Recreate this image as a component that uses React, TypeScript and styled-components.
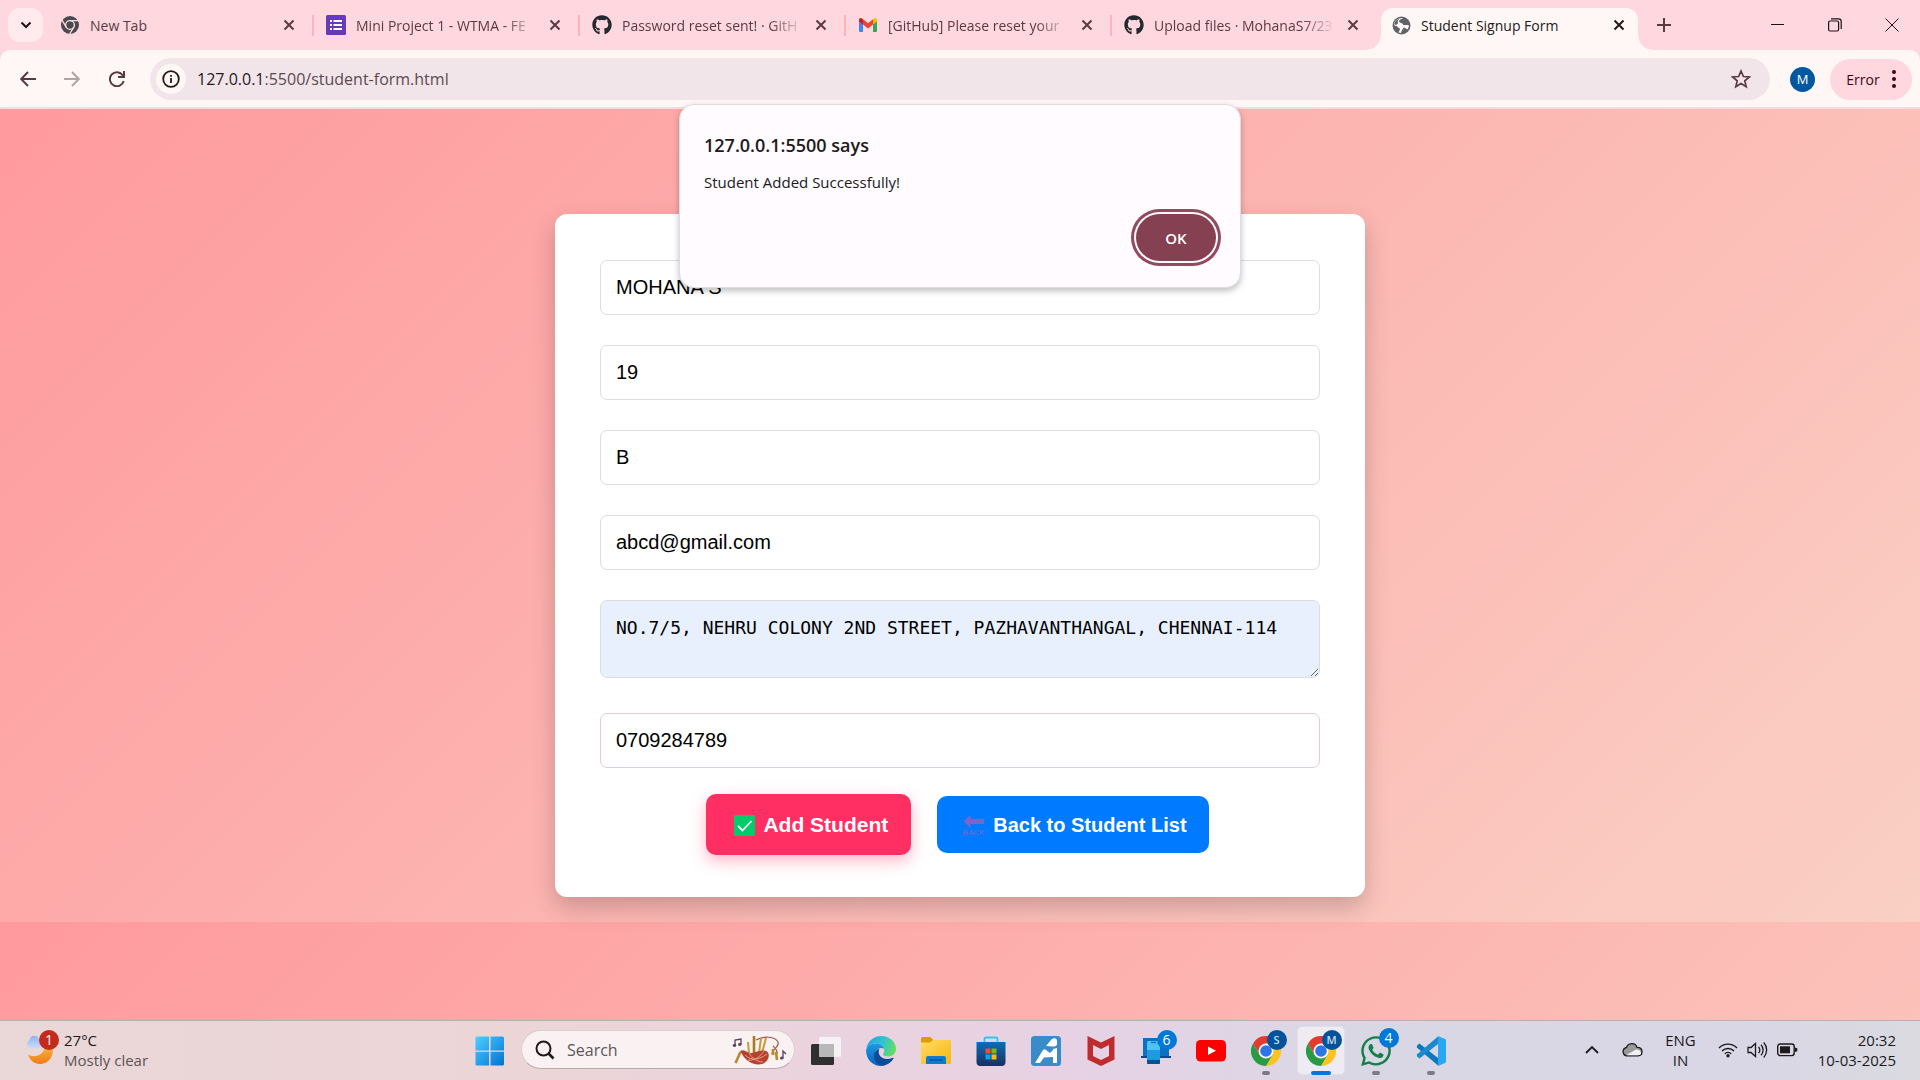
import React from "react";
import styled, { createGlobalStyle, css } from "styled-components";
import { FaGithub, FaWhatsapp } from "react-icons/fa";

const ui = `"Open Sans", "Noto Sans", sans-serif`;
const form = `"Liberation Sans", Arial, sans-serif`;

const Global = createGlobalStyle`
  * { box-sizing: border-box; }
  body { margin: 0; font-family: ${ui}; }
  button { font: inherit; border: 0; padding: 0; background: none; color: inherit; }
  svg { display: block; flex: none; }
`;

const Screen = styled.div`
  min-height: 100vh;
  display: flex;
  flex-direction: column;
`;

/* ---------- tab strip ---------- */
const TabStrip = styled.header`
  height: 50px;
  display: flex;
  align-items: center;
  padding-left: 8px;
  background: #ffd7de;
  color: #5a3a42;
`;
const TabSearch = styled.button`
  width: 35px;
  height: 34px;
  margin-right: 5px;
  border-radius: 12px;
  background: #ffebee;
  color: #221216;
  display: grid;
  place-items: center;
`;
const TabItem = styled.div<{ $last?: boolean }>`
  width: 266px;
  height: 21px;
  min-width: 0;
  display: flex;
  align-items: center;
  padding: 0 15px 0 12px;
  border-right: 2px solid ${(p) => (p.$last ? "transparent" : "#ffb3bf")};
`;
const ActiveTab = styled.div`
  position: relative;
  align-self: flex-end;
  width: 257px;
  height: 42px;
  margin-left: 3px;
  display: flex;
  align-items: center;
  padding: 0 11px;
  padding-bottom: 8px;
  background: #fff7f5;
  border-radius: 12px 12px 0 0;
  color: #22191b;
  &::before, &::after {
    content: "";
    position: absolute;
    bottom: 0;
    width: 14px;
    height: 14px;
  }
  &::before { left: -14px; background: radial-gradient(circle at 0 0, transparent 13px, #fff7f5 14px); }
  &::after { right: -14px; background: radial-gradient(circle at 100% 0, transparent 13px, #fff7f5 14px); }
`;
const TabTitle = styled.span<{ $fade?: boolean }>`
  flex: 1;
  min-width: 0;
  margin: 0 10px;
  padding-top: 1px;
  font-size: 14px;
  line-height: 20px;
  white-space: nowrap;
  overflow: hidden;
  ${(p) => p.$fade && css`mask-image: linear-gradient(90deg, #000 82%, transparent 100%);`}
`;
const IconButton = styled.button<{ $w?: number }>`
  width: ${(p) => p.$w ?? 16}px;
  height: 28px;
  flex: none;
  display: grid;
  place-items: center;
`;
const WindowButtons = styled.div`
  margin-left: auto;
  display: flex;
  color: #1c1214;
`;

/* ---------- toolbar ---------- */
const ToolbarBack = styled.div`
  background: #ffd7de;
`;
const Toolbar = styled.nav`
  height: 59px;
  display: flex;
  align-items: center;
  padding: 1px 8px 0 6px;
  background: #fff7f5;
  border-bottom: 2px solid #f1dde1;
  border-radius: 10px 10px 0 0;
  color: #5a3a42;
`;
const Omnibox = styled.div`
  flex: 1;
  height: 42px;
  margin-left: 11px;
  padding: 0 18px 0 6px;
  display: flex;
  align-items: center;
  gap: 11px;
  border-radius: 21px;
  background: #f2e5ea;
`;
const SiteInfo = styled.button`
  width: 30px;
  height: 30px;
  border-radius: 50%;
  background: #fff7f5;
  color: #22191b;
  display: grid;
  place-items: center;
`;
const Address = styled.div`
  flex: 1;
  font-size: 16px;
  line-height: 24px;
  color: #5a4a50;
  b { font-weight: 400; color: #1f1a1c; }
`;
const Avatar = styled.button`
  width: 25px;
  height: 25px;
  margin: 0 15px 0 20px;
  border-radius: 50%;
  background: #0158a0;
  color: #fff;
  font-size: 13px;
`;
const ErrorPill = styled.button`
  height: 41px;
  width: 82px;
  border-radius: 21px;
  background: #ffd7de;
  color: #3b0716;
  display: flex;
  align-items: center;
  justify-content: center;
  gap: 12px;
  font-size: 14px;
`;

/* ---------- page ---------- */
const Page = styled.main`
  position: relative;
  flex: 1;
  padding: 105px 24px 24px;
  background: linear-gradient(135deg, #ff9a9e, #fad0c4) 0 0 / 100% 813px;
`;
const Card = styled.form`
  max-width: 810px;
  margin: 0 auto;
  padding: 46px 45px 42px;
  border-radius: 12px;
  background: #fff;
  box-shadow: 0 10px 25px rgba(0, 0, 0, 0.2);
  display: flex;
  flex-direction: column;
`;
const fieldStyle = css`
  display: block;
  width: 100%;
  margin: 0 0 30px;
  padding: 0 15px;
  border: 1px solid #ddd;
  border-radius: 7px;
  background: #fff;
  color: #000;
  outline: 0;
`;
const Field = styled.input<{ $tint?: boolean }>`
  ${fieldStyle}
  height: 55px;
  font: 20px ${form};
  ${(p) => p.$tint && css`border-color: #e6ccd5; margin-bottom: 26px;`}
`;
const AddressField = styled.textarea`
  ${fieldStyle}
  height: 78px;
  margin-bottom: 35px;
  padding: 15px;
  background: #e8f0fe;
  font: 18px/24px "DejaVu Sans Mono", monospace;
  white-space: pre;
  overflow: hidden;
`;
const Actions = styled.div`
  display: flex;
  align-items: center;
  justify-content: center;
  gap: 26px;
  padding-right: 5px;
`;
const ActionButton = styled.button<{ $primary?: boolean }>`
  display: flex;
  align-items: center;
  gap: ${(p) => (p.$primary ? 8 : 9)}px;
  height: ${(p) => (p.$primary ? 61 : 57)}px;
  padding: 1px ${(p) => (p.$primary ? 23 : 22)}px 0 ${(p) => (p.$primary ? 28 : 26)}px;
  border-radius: 10px;
  background: ${(p) => (p.$primary ? "#ff2e63" : "#007bff")};
  box-shadow: ${(p) => (p.$primary ? "0 6px 16px rgba(255, 46, 99, 0.35)" : "none")};
  color: #fff;
  font: bold ${(p) => (p.$primary ? 21 : 20)}px ${form};
  white-space: nowrap;
`;

/* ---------- alert ---------- */
const Alert = styled.div`
  position: absolute;
  top: -5px;
  left: 50%;
  width: 562px;
  margin-left: -281px;
  padding: 28px 22px 26px 24px;
  border: 1px solid #dfdde2;
  border-radius: 15px;
  background: #fffbff;
  box-shadow: 0 3px 6px rgba(0, 0, 0, 0.25);
  color: #201a1b;
  display: flex;
  flex-direction: column;
`;
const AlertTitle = styled.h1`
  margin: 0;
  font-size: 18px;
  line-height: 24px;
  font-weight: 600;
`;
const AlertText = styled.p`
  margin: 15px 0 22px;
  font-size: 15px;
  line-height: 20px;
`;
const OkButton = styled.button`
  align-self: flex-end;
  width: 80px;
  height: 47px;
  margin-right: 2px;
  border-radius: 24px;
  background: #854152;
  box-shadow: 0 0 0 2px #fffbff, 0 0 0 5px #914a5e;
  color: #fff;
  font-size: 15px;
  font-weight: 600;
`;

/* ---------- taskbar ---------- */
const Taskbar = styled.footer`
  height: 60px;
  display: grid;
  grid-template-columns: 1fr auto 1fr;
  align-items: center;
  border-top: 1px solid #b9aeb4;
  background: linear-gradient(90deg, #ead7d7 0%, #ecd5d7 28%, #ead3df 45%, #e6d2e5 57%, #dad7e5 70%, #d9d7e5 92%, #dadae0 100%);
  color: #1c1a1c;
`;
const Weather = styled.div`
  display: flex;
  align-items: center;
  gap: 4px;
  padding: 0 0 2px 25px;
`;
const TwoLines = styled.div<{ $align?: string }>`
  font-size: 15px;
  line-height: 20px;
  text-align: ${(p) => p.$align ?? "left"};
  white-space: nowrap;
  small { font-size: 15px; color: #5a5356; }
`;
const Dock = styled.div`
  display: flex;
  align-items: center;
`;
const DockItem = styled.button`
  position: relative;
  width: 55px;
  height: 59px;
  display: grid;
  place-items: center;
`;
const ActiveTile = styled.span`
  position: absolute;
  inset: 5px 3px 5px 4px;
  border: 1px solid #e2dfe8;
  border-radius: 5px;
  background: #eeebf3;
`;
const DockArt = styled.span`
  position: relative;
`;
const Badge = styled.span<{ $dark?: boolean }>`
  position: absolute;
  right: -6px;
  top: -6px;
  width: 20px;
  height: 20px;
  border-radius: 50%;
  background: ${(p) => (p.$dark ? "#04539a" : "#0078d7")};
  color: ${(p) => (p.$dark ? "#c3dcf1" : "#fff")};
  font-size: ${(p) => (p.$dark ? 11 : 14)}px;
  line-height: 20px;
  font-weight: ${(p) => (p.$dark ? 600 : 400)};
  text-align: center;
`;
const Running = styled.span<{ $active?: boolean }>`
  position: absolute;
  bottom: 5px;
  left: 50%;
  width: ${(p) => (p.$active ? 20 : 8)}px;
  margin-left: ${(p) => (p.$active ? -10 : -4)}px;
  height: 4px;
  border-radius: 2px;
  background: ${(p) => (p.$active ? "#0078d7" : "#7f7983")};
`;
const SearchBox = styled.label`
  width: 274px;
  height: 39px;
  margin: 0 3px 2px 4px;
  padding: 0 6px 0 13px;
  display: flex;
  align-items: center;
  gap: 12px;
  border: 1px solid #dccdd0;
  border-bottom-color: #b8abae;
  border-radius: 20px;
  background: #f9f1f2;
  input {
    flex: 1;
    min-width: 0;
    padding: 0;
    border: 0;
    outline: 0;
    background: none;
    font: 16px ${ui};
    &::placeholder { color: #5c5759; opacity: 1; }
  }
`;
const Tray = styled.div`
  display: flex;
  align-items: center;
  justify-content: flex-end;
  padding: 0 24px 2px 0;
`;
const TrayGroup = styled.div`
  display: flex;
  align-items: center;
  gap: 9px;
  margin: 0 20px 0 22px;
`;
const TrayButton = styled.button<{ $gap: number }>`
  margin-right: ${(p) => p.$gap}px;
`;

/* ---------- drawings ---------- */
const Close = ({ label, c }: { label: string; c?: string }) => (
  <IconButton type="button" aria-label={label}>
    <svg width="12" height="12" viewBox="0 0 12 12" stroke={c ?? "currentColor"} strokeWidth="2"><path d="M1.5 1.5l9 9M10.5 1.5l-9 9" /></svg>
  </IconButton>
);
const GreyChrome = () => (
  <svg width="20" height="20" viewBox="0 0 20 20">
    <circle cx="10" cy="10" r="9" fill="#474b4f" />
    <circle cx="10" cy="10" r="4.4" fill="none" stroke="#ffd7de" strokeWidth="1.4" />
    <path d="M10 5.6h8.5M6.2 12.2L2 5M13.8 12.2L9.6 19" stroke="#ffd7de" strokeWidth="1.4" />
  </svg>
);
const Forms = () => (
  <svg width="20" height="20" viewBox="0 0 20 20">
    <rect width="20" height="20" rx="1.5" fill="#673ab7" />
    <path d="M4 5h2v2H4zM7.500 5H16v2H7.500zM4 9h2v2H4zM7.500 9H16v2H7.500zM4 13h2v2H4zM7.500 13H16v2H7.500z" fill="#fff" />
  </svg>
);
const Gmail = () => (
  <svg width="20" height="20" viewBox="0 0 20 20">
    <path d="M1 5v11a1 1 0 001 1h3V8z" fill="#4285f4" />
    <path d="M19 5v11a1 1 0 01-1 1h-3V8z" fill="#34a853" />
    <path d="M15 4.500V9.500l4-3V5c0-2-2-2.600-3.200-1.500z" fill="#fbbc04" />
    <path d="M5 4.500V9.500L1 6.500V5c0-2 2-2.600 3.200-1.500z" fill="#c5221f" />
    <path d="M5 4.300l5 3.900 5-3.900V9.500l-5 3.900-5-3.900z" fill="#ea4335" />
  </svg>
);
const Globe = () => (
  <svg width="19" height="19" viewBox="0 0 19 19">
    <circle cx="9.500" cy="9.500" r="9" fill="#5f6368" />
    <path d="M11 2c-1.200 1.200-3.200 1-3.800 2.600-.5 1.500.6 2.400 2 2.500 1.300.1 1.300 1.500 2.500 1.900 1.500.4 3.300-.3 5.300.5-.1 1.500-.6 2.800-1.400 3.800-1.500-.4-2-1.500-3.300-1.600-1.600 0-1.300 1.500-2.300 2.500-.8.8-.4 1.800-1 2.800-.9 0-1.700-.2-2.400-.4.300-1.500 1.300-2 1.300-3.300 0-1.800-2-1.500-2.800-2.700C4.400 9.500 3.300 9.600 2 9.200 2 4.800 6 1.500 11 2z" fill="#fff7f5" />
    <path d="M2.200 8.500C2.500 5.500 5 3 8.200 2.200 6.500 3.500 5.500 4.500 5.900 6.200c.3 1.400-.7 2-1.500 2.600z" fill="#5f6368" />
  </svg>
);
const WeatherIcon = () => (
  <svg width="35" height="44" viewBox="0 0 35 44">
    <defs>
      <linearGradient id="moon" x1="0" y1="0" x2="0" y2="1"><stop stopColor="#f8b838" /><stop offset="1" stopColor="#f07a1c" /></linearGradient>
      <linearGradient id="cloud" x1="0" y1="0" x2="0" y2="1"><stop stopColor="#8eb2ee" /><stop offset="1" stopColor="#c9dcf9" /></linearGradient>
    </defs>
    <path d="M27 18c3 9-3 18-12 18-6 0-10-4-12-9 8 3 16 0 17-9z" fill="url(#moon)" />
    <path d="M4.500 20a4.500 4.500 0 010-8C5 7 12 6 14 11c4 0 6 3 5 7-.5 1.500-1.500 2-3 2z" fill="url(#cloud)" />
    <circle cx="24" cy="12" r="10" fill="#c42b1c" />
    <text x="24" y="17" textAnchor="middle" fontSize="14" fill="#fff">1</text>
  </svg>
);
const Windows = () => (
  <svg width="30" height="30" viewBox="0 0 30 30">
    <defs><linearGradient id="win" x1="0" y1="0" x2="1" y2="1"><stop stopColor="#4cd0ff" /><stop offset="1" stopColor="#0072d4" /></linearGradient></defs>
    <path d="M2 .5h12v14H.5V2A1.500 1.500 0 012 .5zM15.500.5h12A1.500 1.500 0 0129 2v12.500H15.500zM.5 15.800H14v13.700H2A1.500 1.500 0 01.5 28zM15.500 15.800H29V28a1.500 1.500 0 01-1.500 1.500h-12z" fill="url(#win)" />
  </svg>
);
const Bagpipes = () => (
  <svg width="56" height="32" viewBox="0 0 56 32" fill="none">
    <path d="M24 6c7-4 19-4 22 2 2 4-6 8-6 12M41 12c2 2 5 4 4 8" stroke="#a4584a" strokeWidth="1.200" />
    <path d="M22 2v17" stroke="#a87a22" strokeWidth="2.600" />
    <path d="M29 4l-2 15M34 4l-4 15M16 8l1 11" stroke="#c79a3a" strokeWidth="2" />
    <path d="M3.500 29l5-11M41 15v6M44 18l1 8" stroke="#b98a2c" strokeWidth="2.600" />
    <path d="M8 17c3-2 6 0 9 2 5 1 10-4 17-2 5 2 3 11-4 13-9 2-17-4-20-10z" fill="#b5412e" />
    <path d="M13 21c6 6 14 5 22-1M17 19c3 5 8 9 14 9M16 26c6 1 12-3 16-9" stroke="#e9a88f" strokeWidth=".9" />
    <path d="M3 11V6l6-1v5" stroke="#59425c" strokeWidth="1.300" />
    <ellipse cx="2.500" cy="11.500" rx="1.800" ry="1.400" fill="#59425c" /><ellipse cx="7.800" cy="10.500" rx="1.800" ry="1.400" fill="#59425c" />
    <path d="M51 24v-7l3 3" stroke="#59425c" strokeWidth="1.300" /><ellipse cx="49.800" cy="24" rx="1.800" ry="1.500" fill="#59425c" />
  </svg>
);
const TaskView = () => (
  <svg width="30" height="28" viewBox="0 0 30 28">
    <rect x="0" y="7" width="23" height="21" rx="1.500" fill="#2f2f2f" />
    <rect x="8" y="0" width="22" height="20" rx="1.500" fill="#f4f2f4" />
    <path d="M8 7h15v13H9.500A1.500 1.500 0 018 18.500z" fill="#b9b8b9" />
  </svg>
);
const Edge = () => (
  <svg width="30" height="30" viewBox="0 0 30 30">
    <defs>
      <linearGradient id="eg" x1="0" y1=".3" x2="1" y2=".6"><stop stopColor="#22a3e6" /><stop offset=".5" stopColor="#30c3d0" /><stop offset="1" stopColor="#66e05a" /></linearGradient>
      <linearGradient id="eb" x1="0" y1="0" x2="0" y2="1"><stop stopColor="#1a9be4" /><stop offset="1" stopColor="#0a62b8" /></linearGradient>
    </defs>
    <path d="M.3 13C1.500 5.500 7.500 0 15 0c9 0 15 6.500 15 13 0 5-4 7.500-8 7.500-3.500 0-5-1.300-5-2.200 0-.8 1.300-1.500 1.300-3.800C18.300 11 14.500 7.500 9.500 7.500 5 7.500 1.500 10 .3 13z" fill="url(#eg)" />
    <path d="M.1 14.500C.5 10.500 4.500 7.500 9.500 7.500c4.500 0 7.500 2.300 8.500 5-5-2-9 1.500-9 6 0 6 5 11 10 10.800-1.300.5-2.600.7-4 .7C6.500 30 0 23 .1 14.500z" fill="url(#eb)" />
    <path d="M13.500 12.500c-3.500 1.500-5.500 4-5.500 7.500C8 26 13 30 18 29.500c4-.8 7.500-3.500 9.500-7 .3-.6-.2-1-.8-.8-7 3-14 0-14-5.700 0-1.500.3-2.700.8-3.500z" fill="#0c4a9a" />
  </svg>
);
const Folder = () => (
  <svg width="30" height="27" viewBox="0 0 30 27">
    <defs><linearGradient id="fo" x1="0" y1="0" x2="1" y2="1"><stop stopColor="#ffdc66" /><stop offset="1" stopColor="#f7b70a" /></linearGradient></defs>
    <path d="M0 1.500A1.500 1.500 0 011.500 0H9l3.500 3V8H0z" fill="#dc9c05" />
    <path d="M0 5.500h9L12 3h17a1 1 0 011 1v22a1 1 0 01-1 1H1a1 1 0 01-1-1z" fill="url(#fo)" />
    <path d="M5 27v-6a2 2 0 012-2h16a2 2 0 012 2v6z" fill="#0f7bd0" /><path d="M8.500 23h13" stroke="#0a4f92" strokeWidth="1.300" />
  </svg>
);
const Store = () => (
  <svg width="30" height="30" viewBox="0 0 30 30">
    <defs><linearGradient id="st" x1="0" y1="0" x2="0" y2="1"><stop stopColor="#0f6cbd" /><stop offset="1" stopColor="#1b2f5c" /></linearGradient></defs>
    <path d="M8.500 7V3A1.500 1.500 0 0110 1.500h10A1.500 1.500 0 0121.500 3v4" fill="none" stroke="#35c1f1" strokeWidth="1.800" />
    <path d="M.5 6h29v20a4 4 0 01-4 4h-21a4 4 0 01-4-4z" fill="url(#st)" />
    <path d="M9.500 12.500h5v5h-5z" fill="#f25022" /><path d="M15.500 12.500h5v5h-5z" fill="#7fba00" /><path d="M9.500 18.500h5v5h-5z" fill="#00a4ef" /><path d="M15.500 18.500h5v5h-5z" fill="#ffb900" />
  </svg>
);
const AiApp = () => (
  <svg width="30" height="30" viewBox="0 0 30 30">
    <rect width="30" height="30" rx="3.500" fill="#3a8bc9" />
    <path d="M4 27l8-13c1-1 2-1 3 0l4 3 3-3v-1l4-1v15h-4v-6l-9 .5L9 27z" fill="#fff" />
    <path d="M15 10l5-6c2-2.500 6-2.500 6 1v3c0 2-2 2.500-4 2.500z" fill="#fff" />
  </svg>
);
const McAfee = () => (
  <svg width="28" height="30" viewBox="0 0 28 30"><path d="M.5 0L14 6.500 27.500 0v23.500L14 30 .5 23.500zM6 9v11l8 4 8-4V9l-8 4z" fill="#c02c2e" fillRule="evenodd" /></svg>
);
const PhoneLink = () => (
  <svg width="30" height="30" viewBox="0 0 30 30">
    <path d="M2 2h26v18H2z" fill="#0f6fc0" /><path d="M0 20h30v2H0z" fill="#0a4a86" />
    <rect x="6" y="5" width="13" height="23" rx="1.500" fill="#4cc4f2" /><path d="M6 14h13v14H6z" fill="#1e9be0" /><path d="M6 24h13v2.500a1.500 1.500 0 01-1.500 1.500h-10A1.500 1.500 0 016 26.500z" fill="#0b4f93" /><path d="M10 6.500h5" stroke="#0f6fc0" strokeWidth="1.300" />
  </svg>
);
const YouTube = () => (
  <svg width="30" height="30" viewBox="0 0 30 30"><rect y="4" width="30" height="21.500" rx="4.500" fill="#f00" /><path d="M12 10.500v8.500l8-4.200z" fill="#fff" /></svg>
);
const Chrome = () => (
  <svg width="30" height="30" viewBox="0 0 30 30">
    <path d="M15 7.500h13A15 15 0 0115 30l6.500-11.200z" fill="#fcc31e" />
    <path d="M2 7.500A15 15 0 0128 7.500H15L8.500 18.700z" fill="#e33b2e" />
    <path d="M2 7.500A15 15 0 0015 30l6.500-11.200-13 0z" fill="#2b9a45" />
    <circle cx="15" cy="15" r="7.500" fill="#fff" /><circle cx="15" cy="15" r="5.800" fill="#2c74e8" />
  </svg>
);
const Code = () => (
  <svg width="30" height="30" viewBox="0 0 30 30">
    <path d="M1 9.500L3.500 7.500 22 22v7.500L.8 11.500z" fill="#0f78bd" />
    <path d="M1 20.500L3.500 22.500 22 8V.5L.8 18.500z" fill="#1a89d0" />
    <path d="M22 0l7 3a1.500 1.500 0 011 1.500v21a1.500 1.500 0 01-1 1.500l-7 3z" fill="#2aa7f2" />
  </svg>
);
const CheckMark = () => (
  <svg width="21" height="21" viewBox="0 0 21 21"><rect width="21" height="21" rx="2" fill="#00cc6a" /><path d="M4 11l4.500 4.500L17.500 6" fill="none" stroke="#fff" strokeWidth="1.800" /></svg>
);
const BackArrow = () => (
  <svg width="21" height="21" viewBox="0 0 21 21"><path d="M.5 6.500L7.500 0v4H21v5H7.500V13z" fill="#8262c8" /><text x="10.500" y="20" textAnchor="middle" fontSize="8" fontWeight="400" fill="#8262c8">BACK</text></svg>
);

const tabs = [
  { title: "New Tab", icon: <GreyChrome />, fade: false },
  { title: "Mini Project 1 - WTMA - FE", icon: <Forms />, fade: true },
  { title: "Password reset sent! · GitH", icon: <FaGithub size={20} color="#24292f" />, fade: true },
  { title: "[GitHub] Please reset your", icon: <Gmail />, fade: true },
  { title: "Upload files · MohanaS7/23", icon: <FaGithub size={20} color="#24292f" />, fade: true },
];

const apps: { name: string; art: React.ReactNode; badge?: string; dark?: boolean; running?: boolean; active?: boolean }[] = [
  { name: "Task view", art: <TaskView /> },
  { name: "Edge", art: <Edge /> },
  { name: "File Explorer", art: <Folder /> },
  { name: "Store", art: <Store /> },
  { name: "AI", art: <AiApp /> },
  { name: "McAfee", art: <McAfee /> },
  { name: "Phone Link", art: <PhoneLink />, badge: "6" },
  { name: "YouTube", art: <YouTube /> },
  { name: "Chrome S", art: <Chrome />, badge: "S", dark: true, running: true },
  { name: "Chrome M", art: <Chrome />, badge: "M", dark: true, running: true, active: true },
  { name: "WhatsApp", art: <FaWhatsapp size={34} color="#128048" />, badge: "4", running: true },
  { name: "VS Code", art: <Code />, running: true },
];

export default function App() {
  return (
    <Screen>
      <Global />
      <TabStrip>
        <TabSearch type="button" aria-label="Search tabs">
          <svg width="12" height="8" viewBox="0 0 12 8" fill="none" stroke="currentColor" strokeWidth="2"><path d="M1.500 1.500L6 6l4.500-4.500" /></svg>
        </TabSearch>
        {tabs.map((t, i) => (
          <TabItem key={t.title} $last={i === tabs.length - 1}>
            {t.icon}
            <TabTitle $fade={t.fade}>{t.title}</TabTitle>
            <Close label={"Close " + t.title} />
          </TabItem>
        ))}
        <ActiveTab>
          <Globe />
          <TabTitle>Student Signup Form</TabTitle>
          <Close label="Close Student Signup Form" />
        </ActiveTab>
        <IconButton $w={52} type="button" aria-label="New tab">
          <svg width="14" height="14" viewBox="0 0 14 14" stroke="currentColor" strokeWidth="2"><path d="M7 0v14M0 7h14" /></svg>
        </IconButton>
        <WindowButtons>
          <IconButton $w={57} type="button" aria-label="Minimize">
            <svg width="13" height="13" viewBox="0 0 13 13" stroke="currentColor"><path d="M0 5.500h13" /></svg>
          </IconButton>
          <IconButton $w={57} type="button" aria-label="Restore">
            <svg width="14" height="14" viewBox="0 0 14 14" fill="none" stroke="currentColor" strokeWidth="1.200"><rect x=".6" y="3" width="10" height="10" rx="1.500" /><path d="M3 .8h7.500a2.700 2.700 0 012.700 2.700V11" /></svg>
          </IconButton>
          <IconButton $w={57} type="button" aria-label="Close window">
            <svg width="14" height="14" viewBox="0 0 14 14" stroke="currentColor"><path d="M.5.5l13 13M13.500.5l-13 13" /></svg>
          </IconButton>
        </WindowButtons>
      </TabStrip>

      <ToolbarBack>
        <Toolbar>
          <IconButton $w={44} type="button" aria-label="Back">
            <svg width="16" height="16" viewBox="0 0 16 16" fill="none" stroke="currentColor" strokeWidth="2"><path d="M16 8H1.500M8 1L1.200 8 8 15" /></svg>
          </IconButton>
          <IconButton $w={44} type="button" aria-label="Forward">
            <svg width="16" height="16" viewBox="0 0 16 16" fill="none" stroke="#b3a3a6" strokeWidth="2"><path d="M0 8h14.500M8 1l6.800 7L8 15" /></svg>
          </IconButton>
          <IconButton $w={45} type="button" aria-label="Reload">
            <svg width="16" height="16" viewBox="0 0 16 16" fill="none" stroke="currentColor" strokeWidth="2"><path d="M14.700 10A7 7 0 1113.500 4L15 5.500M15 0v6H9" /></svg>
          </IconButton>
          <Omnibox>
            <SiteInfo type="button" aria-label="Site information">
              <svg width="18" height="18" viewBox="0 0 18 18" fill="none" stroke="currentColor" strokeWidth="1.800"><circle cx="9" cy="9" r="7.800" /><path d="M9 8v5M9 5v1.800" /></svg>
            </SiteInfo>
            <Address><b>127.0.0.1</b>:5500/student-form.html</Address>
            <IconButton $w={22} type="button" aria-label="Bookmark">
              <svg width="20" height="20" viewBox="0 0 20 20" fill="none" stroke="currentColor" strokeWidth="1.700"><path d="M10 2l2.400 5.500 5.900.5-4.500 3.900 1.400 5.800-5.200-3.100-5.200 3.100 1.400-5.800L1.700 8l5.900-.5z" /></svg>
            </IconButton>
          </Omnibox>
          <Avatar type="button">M</Avatar>
          <ErrorPill type="button">
            Error
            <svg width="4" height="18" viewBox="0 0 4 18" fill="currentColor"><circle cx="2" cy="2" r="2" /><circle cx="2" cy="9" r="2" /><circle cx="2" cy="16" r="2" /></svg>
          </ErrorPill>
        </Toolbar>
      </ToolbarBack>

      <Page>
        <Card onSubmit={(e) => e.preventDefault()}>
          <Field aria-label="Name" defaultValue="MOHANA S" />
          <Field aria-label="Age" defaultValue="19" />
          <Field aria-label="Section" defaultValue="B" />
          <Field aria-label="Email" defaultValue="abcd@gmail.com" />
          <AddressField aria-label="Address" defaultValue="NO.7/5, NEHRU COLONY 2ND STREET, PAZHAVANTHANGAL, CHENNAI-114" />
          <Field aria-label="Phone" $tint defaultValue="0709284789" />
          <Actions>
            <ActionButton $primary type="submit"><CheckMark />Add Student</ActionButton>
            <ActionButton type="button"><BackArrow />Back to Student List</ActionButton>
          </Actions>
        </Card>
        <Alert role="alertdialog" aria-label="127.0.0.1:5500 says">
          <AlertTitle>127.0.0.1:5500 says</AlertTitle>
          <AlertText>Student Added Successfully!</AlertText>
          <OkButton type="button">OK</OkButton>
        </Alert>
      </Page>

      <Taskbar>
        <Weather>
          <WeatherIcon />
          <TwoLines>27°C<br /><small>Mostly clear</small></TwoLines>
        </Weather>
        <Dock>
          <DockItem type="button" aria-label="Start"><Windows /></DockItem>
          <SearchBox>
            <svg width="20" height="20" viewBox="0 0 20 20" fill="none" stroke="#1f1b1d" strokeWidth="2"><circle cx="8.500" cy="8.500" r="7" /><path d="M13.500 13.500l5 5" strokeWidth="2.600" /></svg>
            <input aria-label="Search" placeholder="Search" />
            <Bagpipes />
          </SearchBox>
          {apps.map((a) => (
            <DockItem key={a.name} type="button" aria-label={a.name}>
              {a.active && <ActiveTile />}
              <DockArt>
                {a.art}
                {a.badge && <Badge $dark={a.dark}>{a.badge}</Badge>}
              </DockArt>
              {a.running && <Running $active={a.active} />}
            </DockItem>
          ))}
        </Dock>
        <Tray>
          <TrayButton $gap={23} type="button" aria-label="Show hidden icons">
            <svg width="14" height="9" viewBox="0 0 14 9" fill="none" stroke="currentColor" strokeWidth="1.800"><path d="M1 8l6-6 6 6" /></svg>
          </TrayButton>
          <TrayButton $gap={22} type="button" aria-label="OneDrive">
            <svg width="21" height="15" viewBox="0 0 21 15"><path d="M5 13.800A4.200 4.200 0 014.500 5.500C6 1 13 0 15 5.300c3.500-.2 5 2 5 4.300s-1.600 4.200-4 4.200z" fill="#9a999d" stroke="#1c1a1c" strokeWidth="1.300" /><path d="M4.500 13L14 7.500c3 0 5 1.500 5 3.500 0 1.500-1 2.200-3 2.200H5z" fill="#f1f0f3" /></svg>
          </TrayButton>
          <TwoLines $align="center">ENG<br />IN</TwoLines>
          <TrayGroup>
            <svg width="20" height="16" viewBox="0 0 20 16" fill="none" stroke="currentColor" strokeWidth="1.400"><path d="M1 6a12.500 12.500 0 0118 0M4 9a8.500 8.500 0 0112 0M6.800 11.700a4.500 4.500 0 016.400 0" /><circle cx="10" cy="13.800" r="1.700" fill="currentColor" stroke="none" /></svg>
            <svg width="21" height="18" viewBox="0 0 21 18" fill="none" stroke="currentColor" strokeWidth="1.300"><path d="M1 6.500h3L8.500 2.500v13L4 11.500H1zM11.500 6a4 4 0 010 6M14 3.800a7.500 7.500 0 010 10.400M16.700 1.500a11 11 0 010 15" /></svg>
            <svg width="21" height="14" viewBox="0 0 21 14"><rect x=".7" y="1" width="16.500" height="11.600" rx="2.500" fill="none" stroke="currentColor" strokeWidth="1.400" /><rect x="3" y="3.300" width="10" height="7" fill="currentColor" /><path d="M18 4.500l2.300.8v3L18 9z" fill="currentColor" /></svg>
          </TrayGroup>
          <TwoLines $align="right">20:32<br />10-03-2025</TwoLines>
        </Tray>
      </Taskbar>
    </Screen>
  );
}
